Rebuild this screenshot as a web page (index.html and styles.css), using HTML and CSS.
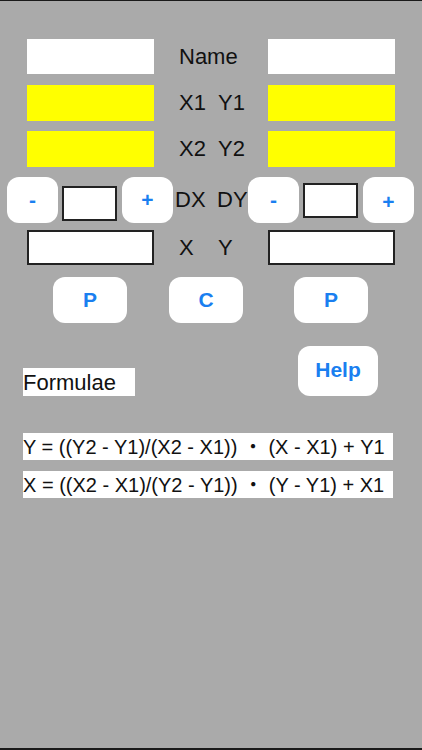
FILE: index.html
```html
<!DOCTYPE html>
<html>
<head>
    <title>Line Points</title>
    <link rel="stylesheet" href="styles.css">
</head>
<body>
    <div class="screen">
        <div class="row">
            <input class="field" type="text">
            <div class="label"><span>Name</span></div>
            <input class="field" type="text">
        </div>
        <div class="row row-tall">
            <input class="field yellow" type="text">
            <div class="label"><span class="first">X1</span><span>Y1</span></div>
            <input class="field yellow" type="text">
        </div>
        <div class="row row-tall">
            <input class="field yellow" type="text">
            <div class="label"><span class="first">X2</span><span>Y2</span></div>
            <input class="field yellow" type="text">
        </div>

        <div class="step-row">
            <button class="btn btn-step">-</button>
            <input class="small-field left" type="text">
            <button class="btn btn-step">+</button>
            <div class="step-label"><span class="first">DX</span><span>DY</span></div>
            <button class="btn btn-step">-</button>
            <input class="small-field right" type="text">
            <button class="btn btn-step plus-low">+</button>
        </div>

        <div class="row xy-row">
            <input class="field boxed" type="text">
            <div class="label"><span class="first">X</span><span>Y</span></div>
            <input class="field boxed" type="text">
        </div>

        <div class="action-row">
            <button class="btn btn-action">P</button>
            <button class="btn btn-action mid">C</button>
            <button class="btn btn-action last">P</button>
        </div>

        <div class="formula-head">
            <div class="tag">Formulae</div>
            <button class="btn btn-help">Help</button>
        </div>

        <div class="formula">Y = ((Y2 - Y1)/(X2 - X1)) ・ (X - X1) + Y1</div>
        <div class="formula second">X = ((X2 - X1)/(Y2 - Y1)) ・ (Y - Y1) + X1</div>
    </div>
</body>
</html>
```

FILE: styles.css
```css
body {
    margin: 0;
    background-color: #aaaaaa;
    font-family: "Liberation Sans", "Noto Sans CJK JP", sans-serif;
    color: #111;
}
.screen {
    box-sizing: border-box;
    height: 750px;
    border-top: 1px solid #1a1a1a;
    border-bottom: 2px solid #1a1a1a;
    padding-top: 38px;
}
input {
    box-sizing: border-box;
    margin: 0;
    padding: 0;
    border: none;
    outline: none;
    background-color: white;
}
.row {
    display: flex;
    align-items: center;
    padding-left: 27px;
    height: 35px;
    margin-bottom: 11px;
}
.row-tall {
    height: 36px;
    margin-bottom: 10px;
}
.field {
    width: 127px;
    height: 100%;
}
.yellow {
    background-color: #ffff00;
}
.boxed {
    border: 2px solid #222;
}
.label {
    width: 114px;
    box-sizing: border-box;
    padding-left: 25px;
    font-size: 22px;
    display: flex;
}
.label .first {
    width: 39px;
}

.btn {
    border: none;
    background-color: white;
    color: #1a7ff0;
    font-family: "Liberation Sans", sans-serif;
    font-weight: bold;
    font-size: 21px;
    padding: 0;
    cursor: pointer;
}

.step-row {
    display: flex;
    align-items: flex-start;
    height: 46px;
    padding-left: 7px;
    margin-bottom: 7px;
}
.btn-step {
    width: 51px;
    height: 46px;
    border-radius: 12px;
}
.plus-low {
    padding-top: 4px;
}
.small-field {
    width: 55px;
    height: 35px;
    border: 2px solid #222;
    margin: 0 5px 0 4px;
}
.small-field.left {
    margin-top: 9px;
}
.small-field.right {
    margin-top: 6px;
}
.step-label {
    display: flex;
    box-sizing: border-box;
    width: 75px;
    padding-left: 2px;
    font-size: 22px;
    line-height: 46px;
}
.step-label .first {
    width: 42px;
}

.xy-row {
    margin-bottom: 12px;
}

.action-row {
    display: flex;
    padding-left: 53px;
    height: 46px;
}
.btn-action {
    width: 74px;
    height: 46px;
    border-radius: 12px;
}
.btn-action.mid {
    margin-left: 42px;
}
.btn-action.last {
    margin-left: 51px;
}

.formula-head {
    display: flex;
    align-items: flex-end;
    justify-content: space-between;
    margin: 23px 44px 0 23px;
    height: 50px;
}
.tag {
    background-color: white;
    width: 112px;
    height: 28px;
    font-size: 22px;
    line-height: 29px;
}
.btn-help {
    width: 80px;
    height: 50px;
    border-radius: 12px;
    padding-bottom: 2px;
}

.formula {
    background-color: white;
    width: 370px;
    margin: 37px 0 0 23px;
    height: 27px;
    font-size: 20px;
    line-height: 28px;
    white-space: nowrap;
}
.formula.second {
    margin-top: 11px;
}
```
